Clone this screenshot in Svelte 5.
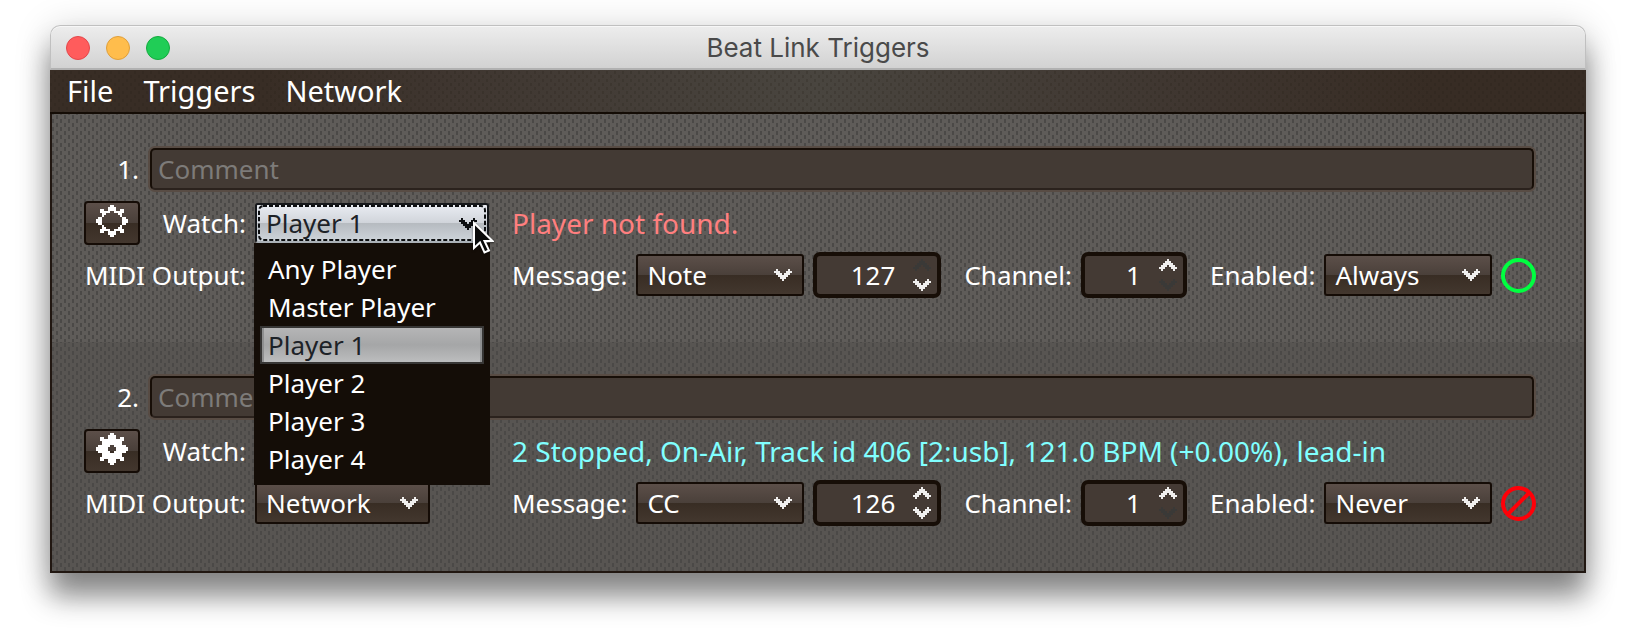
<script>
  const chevron = [
    '.#.....#.',
    '###...###',
    '.###.###.',
    '..#####..',
    '...###...',
    '....#....'
  ];

  const gearOutline = [
    '.......##.......',
    '......####......',
    '..##..####..##..',
    '..#####..#####..',
    '...##......##...',
    '...#........#...',
    '.##..........##.',
    '###..........###',
    '###..........###',
    '.##..........##.',
    '...#........#...',
    '...##......##...',
    '..#####..#####..',
    '..##..####..##..',
    '......####......',
    '.......##.......'
  ];

  const gearSolid = [
    '.......##.......',
    '......####......',
    '..##..####..##..',
    '..############..',
    '...##########...',
    '...##########...',
    '.######..######.',
    '######....######',
    '######....######',
    '.######..######.',
    '...##########...',
    '...##########...',
    '..############..',
    '..##..####..##..',
    '......####......',
    '.......##.......'
  ];

  const toPath = (rows) =>
    rows
      .map((row, y) => [...row].map((c, x) => (c === '#' ? `M${x} ${y}h1v1h-1z` : '')).join(''))
      .join('');

  const menus = ['File', 'Triggers', 'Network'];
  const players = ['Any Player', 'Master Player', 'Player 1', 'Player 2', 'Player 3', 'Player 4'];

  const triggers = [
    {
      id: 1, gear: gearOutline, watch: 'Player 1', open: true, status: 'Player not found.', found: false,
      output: 'Network', message: 'Note', note: 127, noteUp: false, noteDown: true,
      channel: 1, enabled: 'Always', active: true
    },
    {
      id: 2, gear: gearSolid, watch: 'Player 2', open: false,
      status: '2 Stopped, On-Air, Track id 406 [2:usb], 121.0 BPM (+0.00%), lead-in', found: true,
      output: 'Network', message: 'CC', note: 126, noteUp: true, noteDown: true,
      channel: 1, enabled: 'Never', active: false
    }
  ];
</script>

{#snippet arrow(up)}
  <svg class="arrow" class:up viewBox="0 0 9 6" aria-hidden="true"><path d={toPath(chevron)} /></svg>
{/snippet}

{#snippet combo(id, value, size)}
  <div class="combo {size}">
    <select {id}><option>{value}</option></select>
    {@render arrow(false)}
  </div>
{/snippet}

{#snippet spinner(id, value, up, down, size)}
  <div class="spinner {size}">
    <input {id} type="text" inputmode="numeric" {value} />
    <div class="steps">
      <button aria-label="Increase" disabled={!up}>{@render arrow(true)}</button>
      <button aria-label="Decrease" disabled={!down}>{@render arrow(false)}</button>
    </div>
  </div>
{/snippet}

<main class="window">
  <header class="titlebar">
    <div class="lights">
      <button class="close" aria-label="Close"></button>
      <button class="minimise" aria-label="Minimise"></button>
      <button class="zoom" aria-label="Zoom"></button>
    </div>
    <h1>Beat Link Triggers</h1>
  </header>

  <nav class="menubar">
    {#each menus as menu}<button>{menu}</button>{/each}
  </nav>

  <div class="content">
    {#each triggers as t}
      <section class="trigger">
        <div class="comment-row">
          <label for="comment-{t.id}">{t.id}.</label>
          <input id="comment-{t.id}" class="comment" type="text" placeholder="Comment" />
        </div>

        <div class="row watch">
          <div class="lead">
            <button class="gear" aria-label="Settings">
              <svg viewBox="0 0 16 16" aria-hidden="true"><path d={toPath(t.gear)} /></svg>
            </button>
            <label for="watch-{t.id}">Watch:</label>
          </div>
          <div class="control">
            <div class="combo wide" class:focused={t.open}>
              <select id="watch-{t.id}"><option>{t.watch}</option></select>
              {@render arrow(false)}
              {#if t.open}
                <svg class="ring" viewBox="0 0 228 34" preserveAspectRatio="none" aria-hidden="true">
                  <rect x="1" y="1" width="226" height="32" rx="4" />
                </svg>
                <ul class="popup" role="listbox" aria-label="Player">
                  {#each players as p}
                    <li role="option" aria-selected={p === t.watch}>{p}</li>
                  {/each}
                </ul>
                <svg class="pointer" viewBox="0 0 22 34" aria-hidden="true">
                  <path d="M2 2V27L8 21.500L12.500 31.500L17 29.500L12.500 20H20.500Z" />
                </svg>
              {/if}
            </div>
          </div>
          <p class="status" class:found={t.found}>{t.status}</p>
        </div>

        <div class="row output">
          <div class="lead"><label for="output-{t.id}">MIDI Output:</label></div>
          <div class="control">{@render combo(`output-${t.id}`, t.output, 'medium')}</div>
          <div class="settings">
            <div class="field">
              <label for="message-{t.id}">Message:</label>
              {@render combo(`message-${t.id}`, t.message, 'small')}
              {@render spinner(`note-${t.id}`, t.note, t.noteUp, t.noteDown, 'three')}
            </div>
            <div class="field">
              <label for="channel-{t.id}">Channel:</label>
              {@render spinner(`channel-${t.id}`, t.channel, true, false, 'two')}
            </div>
            <div class="field">
              <label for="enabled-{t.id}">Enabled:</label>
              {@render combo(`enabled-${t.id}`, t.enabled, 'small')}
              <svg class="lamp" class:active={t.active} viewBox="0 0 36 36" role="img" aria-label={t.active ? 'Enabled' : 'Disabled'}>
                <circle cx="17.500" cy="18.500" r="15.500" />
                {#if !t.active}<path d="M7 29L28 8" />{/if}
              </svg>
            </div>
          </div>
        </div>
      </section>
    {/each}
  </div>
</main>

<style>
  :global(body) { margin: 0; background: #fff; }
  :global(#app) { overflow: hidden; }

  .window, .window * { box-sizing: border-box; }
  .window {
    margin: 25px 46px 71px 50px;
    border-radius: 10px 10px 0 0;
    box-shadow: 0 24px 28px rgba(0, 0, 0, 0.42), 0 4px 36px rgba(0, 0, 0, 0.18);
    font: 26px/36px "Noto Sans", "Open Sans", sans-serif;
    color: #fff;
  }
  button, input, select { font: inherit; color: inherit; margin: 0; padding: 0; border: 0; background: none; }
  h1, p, ul { margin: 0; padding: 0; font-weight: 400; }

  .titlebar {
    display: grid;
    grid-template-columns: 1fr auto 1fr;
    align-items: center;
    height: 45px;
    padding: 2px 15px 0;
    border: 1px solid #c0c0c0;
    border-bottom: 2px solid #b1b1b1;
    border-radius: 10px 10px 0 0;
    background: linear-gradient(#ededed, #d2d2d2);
    box-shadow: inset 0 1px #f7f7f7;
  }
  .titlebar h1 { font: 26px/36px Inter, sans-serif; color: #4a4a4a; }
  .lights { display: flex; gap: 16px; }
  .lights button { width: 24px; height: 24px; border-radius: 50%; border: 1px solid; }
  .lights .close { background: #ff5c5c; border-color: #e4474b; }
  .lights .minimise { background: #ffbd4c; border-color: #e09f3a; }
  .lights .zoom { background: #20cd56; border-color: #14ab3f; }

  .menubar {
    display: flex;
    gap: 30px;
    height: 44px;
    padding: 0 17px;
    border-bottom: 2px solid #140c05;
    background:
      url("data:image/svg+xml,%3Csvg xmlns='http://www.w3.org/2000/svg' width='8' height='8'%3E%3Cpath d='M4 1h2v3h-2zM0 5h2v3h-2z' fill='%23251d16' fill-opacity='.2'/%3E%3C/svg%3E"),
      linear-gradient(90deg, #382d25 14%, #3f3630 26%, #49453f 50%, #3f3630 74%, #372c24 90%);
  }
  .menubar button { font-size: 29px; line-height: 42px; }

  .content {
    border: 2px solid #211711;
    border-top: 0;
    background: #5f5c59;
  }
  .trigger {
    display: flex;
    flex-direction: column;
    padding: 34px 48px 44px 32px;
    background:
      url("data:image/svg+xml,%3Csvg xmlns='http://www.w3.org/2000/svg' width='8' height='8'%3E%3Cpath d='M4 1h2v4h-2z' fill='%234b4947'/%3E%3Cpath d='M0 5h2v3h-2zM0 0h2v1h-2z' fill='%234b4947'/%3E%3C/svg%3E"),
      #5f5c59;
  }
  .trigger:last-child { padding-bottom: 45px; background-color: #585552; }

  .comment-row { display: flex; align-items: center; gap: 11px; padding-right: 2px; }
  .comment-row label { width: 55px; text-align: right; }
  .comment {
    flex: 1;
    min-width: 0;
    height: 42px;
    padding: 0 6px;
    border: 2px solid #170e07;
    border-bottom-color: #2b221d;
    border-radius: 5px;
    background: #433a34;
    box-shadow: 0 0 0 2px #584c44;
  }
  .comment::placeholder { color: #7d7b79; opacity: 1; }

  .row { display: flex; align-items: center; gap: 9px; }
  .watch { height: 44px; margin: 11px 0 7px; }
  .output { height: 46px; }
  .lead { display: flex; flex: none; align-items: center; justify-content: flex-end; width: 162px; }
  .lead .gear { margin-right: auto; }
  .control { flex: none; width: 248px; }

  .gear {
    width: 56px;
    height: 44px;
    padding-bottom: 4px;
    border: 2px solid #150c06;
    border-radius: 4px;
    background: linear-gradient(#5c4f49, #493f39 50%, #382d24 50%, #43372e);
  }
  .gear svg { display: block; width: 32px; height: 32px; margin: auto; fill: #fff; shape-rendering: crispEdges; }

  .combo { position: relative; height: 42px; }
  .combo.wide { width: 234px; height: 40px; }
  .combo.medium { width: 175px; }
  .combo.small { width: 168px; }
  select {
    appearance: none;
    display: block;
    width: 100%;
    height: 100%;
    padding: 0 9px;
    border: 2px solid #150c06;
    border-radius: 3px;
    background: linear-gradient(#5c4f49, #4a403a 50%, #382d24 50%, #43372e);
  }
  .arrow { display: block; width: 18px; height: 12px; fill: #f0efee; shape-rendering: crispEdges; }
  .arrow.up { transform: rotate(180deg); }
  .combo > .arrow { position: absolute; right: 12px; top: 15px; pointer-events: none; }

  .focused select {
    color: #1d2227;
    border-color: #15171a;
    border-bottom-color: #aab0b6;
    background: linear-gradient(#e9ecf2, #d0d4da 50%, #b5babf 50%, #ced4da);
  }
  .focused > .arrow { fill: #0d0f11; }
  .ring {
    position: absolute;
    left: 3px;
    top: 2px;
    width: calc(100% - 6px);
    height: 36px;
    fill: none;
    stroke: #0d0f11;
    stroke-width: 2;
    stroke-dasharray: 4 2;
    pointer-events: none;
  }

  .popup {
    position: absolute;
    z-index: 2;
    top: 100%;
    left: -1px;
    right: -1px;
    padding: 7px 6px 7px;
    background: #140d07;
    list-style: none;
  }
  .popup li { height: 38px; padding: 1px 8px; }
  .popup li[aria-selected="true"] {
    padding: 0 6px;
    border: 2px solid #373635;
    line-height: 34px;
    color: #1d2227;
    background: linear-gradient(#b5b5b6, #a5a6a7 50%, #bcbdbe);
    box-shadow: inset 2px 0 #8e8f90, inset -2px 0 #8e8f90;
  }
  .pointer {
    position: absolute;
    z-index: 3;
    left: 217px;
    top: 18px;
    width: 22px;
    height: 34px;
    fill: #0a0a0a;
    stroke: #fff;
    stroke-width: 2;
    filter: drop-shadow(0 1px 1px rgba(0, 0, 0, 0.5));
  }

  .status { font-size: 28px; white-space: nowrap; color: #ff7f7f; }
  .status.found { color: #80ffff; }

  .settings { display: flex; gap: 23px; }
  .field { display: flex; align-items: center; gap: 9px; }

  .spinner {
    display: flex;
    align-items: center;
    height: 46px;
    border: 4px solid #170e07;
    border-radius: 7px;
    background: #443a34;
  }
  .spinner.three { width: 128px; }
  .spinner.two { width: 106px; }
  .spinner input { flex: 1; min-width: 0; height: 38px; padding-right: 14px; text-align: right; }
  .steps { display: flex; flex-direction: column; gap: 8px; padding: 0 6px 0 4px; }
  .steps button { display: block; height: 12px; }
  .steps button:disabled .arrow { fill: #3a3937; }

  .lamp { width: 36px; height: 36px; fill: none; stroke: #ff0008; stroke-width: 4; }
  .lamp.active { stroke: #00ff40; }
</style>
